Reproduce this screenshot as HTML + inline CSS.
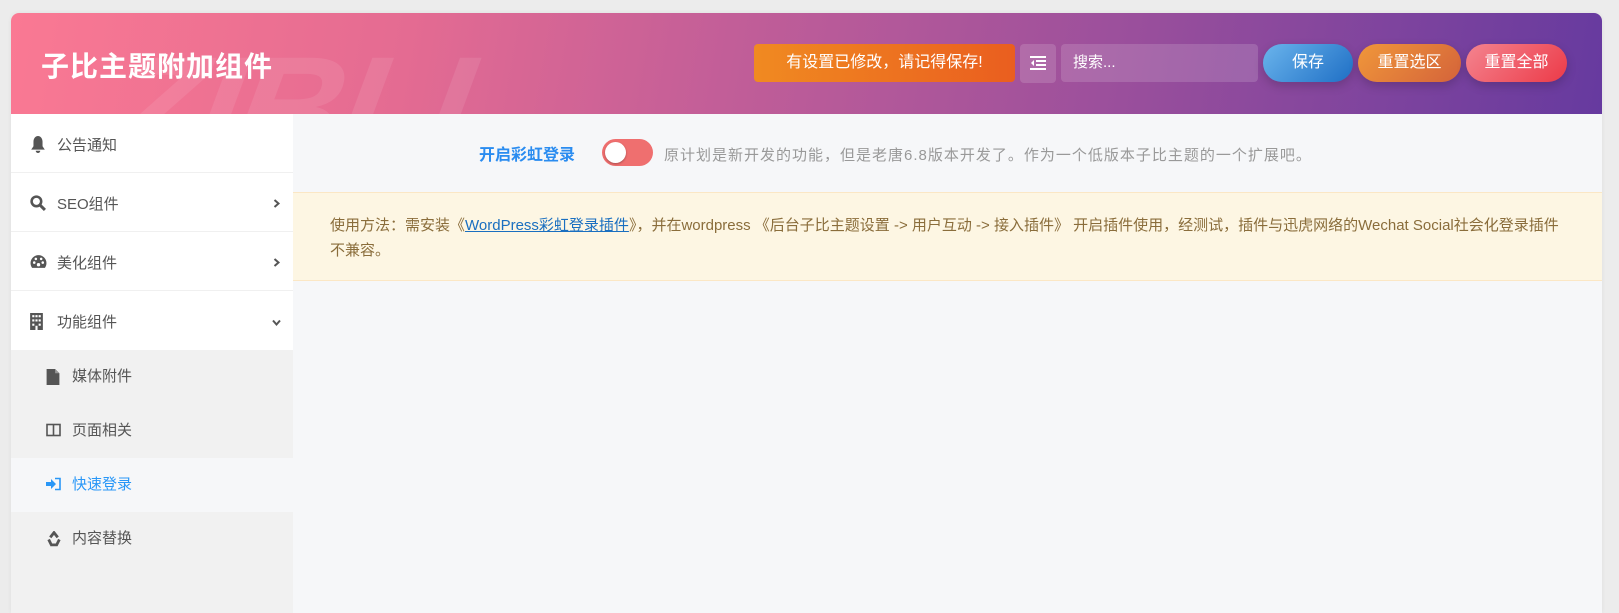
<!DOCTYPE html>
<html><head><meta charset="utf-8"><style>
*{box-sizing:border-box;margin:0;padding:0}
body{width:1619px;height:577px;background:#ececec;font-family:"Liberation Sans","Noto Sans CJK SC",sans-serif;font-size:14px;color:#555;overflow:hidden;position:relative}
.panel{position:absolute;left:11px;top:13px;width:1591px;height:600px;background:#f6f7f9;border-radius:8px 8px 0 0;overflow:hidden;box-shadow:0 0 4px rgba(0,0,0,.06)}
.hdr{position:absolute;left:0;top:0;width:1591px;height:101px;background:linear-gradient(100deg,#fa7993 0%,#e46b92 25%,#c25e98 45%,#9a4f9c 70%,#663a9f 100%);overflow:hidden}
.wm{position:absolute;left:100px;top:10px;font:italic 900 150px "Liberation Sans",sans-serif;color:rgba(255,255,255,.09);letter-spacing:-4px;transform:skewX(-10deg)}
.title{position:absolute;left:30px;top:32px;font-size:28px;font-weight:bold;color:#fff;letter-spacing:1px}
.b{position:absolute;top:31px;height:38px;line-height:37px;color:#fff;text-align:center;font-size:16px}
.note{left:743px;width:261px;background:linear-gradient(90deg,#f08a21,#ea5e1f);border-radius:4px}
.ib{left:1009px;width:36px;top:31px;height:39px;background:rgba(255,255,255,.15);border-radius:4px}
.sr{left:1050px;width:197px;background:rgba(255,255,255,.15);border-radius:4px;text-align:left;padding-left:12px;font-size:15px}
.pill{border-radius:19px;box-shadow:0 4px 10px rgba(0,0,0,.18)}
.sv{left:1252px;width:90px;background:linear-gradient(135deg,#6ab4ec,#1f6fc5)}
.r1{left:1347px;width:103px;background:linear-gradient(135deg,#f0973a,#d4633a)}
.r2{left:1455px;width:101px;background:linear-gradient(135deg,#f4848f,#ec3a48)}
.side{position:absolute;left:0;top:101px;width:283px;height:500px;background:#f1f1f1;border-right:1px solid #f6f7f9}
.it{height:59px;background:#fff;border-bottom:1px solid #f0f0f0;position:relative;line-height:63px;padding-left:46px;font-size:15px;color:#555}
.it svg{position:absolute;left:19px;top:22px}
.it svg.chev{position:absolute;left:261px;top:26px;width:9px;height:9px}
.sub{height:54px;line-height:54px;padding-left:61px;font-size:15px;color:#555;position:relative;background:#f1f1f1}
.sub svg{position:absolute;left:35px;top:19px}
.sub.act{background:#f6f7f9;color:#2997f7}
.lab{position:absolute;left:468px;top:128px;color:#2a8cf0;font-size:16px;font-weight:bold}
.tog{position:absolute;left:591px;top:126px;width:51px;height:27px;border-radius:14px;background:#ef6f6f}
.tog i{position:absolute;left:3px;top:3px;width:21px;height:21px;border-radius:50%;background:#fff;box-shadow:0 1px 2px rgba(0,0,0,.3)}
.desc{position:absolute;left:653px;top:131px;color:#999;font-size:15px;letter-spacing:1px}
.warn{position:absolute;left:282px;top:179px;width:1309px;height:89px;background:#fdf6e3;border-top:1px solid #fbe7c5;border-bottom:1px solid #fbe7c5;color:#8a6d3b;padding:20px 36px 0 37px;line-height:25px;font-size:15px}
.warn a{color:#1a6fc0;text-decoration:underline}
</style></head><body>
<div class="panel">
 <div class="hdr">
  <div class="wm">ZIBLL</div>
  <div class="title">子比主题附加组件</div>
  <div class="b note">有设置已修改，请记得保存!</div>
  <div class="b ib"><svg width="16" height="14" viewBox="0 0 16 14" style="margin-top:12px"><rect x="0" y="0" width="16" height="2" fill="#fff"/><rect x="6" y="4" width="10" height="2" fill="#fff"/><rect x="6" y="8" width="10" height="2" fill="#fff"/><rect x="0" y="12" width="16" height="2" fill="#fff"/><path d="M4 4L1 7L4 10Z" fill="#fff"/></svg></div>
  <div class="b sr">搜索...</div>
  <div class="b pill sv">保存</div>
  <div class="b pill r1">重置选区</div>
  <div class="b pill r2">重置全部</div>
 </div>
 <div class="side">
  <div class="it"><svg width="16" height="17" viewBox="0 0 14 15"><path d="M7 0C5 0 3 2 3 5v4L1 12h12l-2-3V5C11 2 9 0 7 0z M5 13a2 2 0 004 0z" fill="#555"/></svg>公告通知</div>
  <div class="it"><svg width="16" height="16" viewBox="0 0 15 15"><circle cx="6" cy="6" r="4.5" stroke="#555" stroke-width="2.4" fill="none"/><path d="M9.5 9.5L14 14" stroke="#555" stroke-width="2.8"/></svg>SEO组件<svg class="chev" viewBox="0 0 9 9"><path d="M2.5 1L6.5 4.5L2.5 8" stroke="#555" stroke-width="2" fill="none"/></svg></div>
  <div class="it"><svg width="17" height="15" viewBox="0 0 16 14"><path d="M8 1a7.5 7.5 0 00-7.5 7.5c0 2 .8 3.5 1.5 4.5h12c.7-1 1.5-2.5 1.5-4.5A7.5 7.5 0 008 1z" fill="#555"/><circle cx="4" cy="8" r="1.2" fill="#fff"/><circle cx="5.5" cy="4.5" r="1.2" fill="#fff"/><circle cx="10.5" cy="4.5" r="1.2" fill="#fff"/><circle cx="12" cy="8" r="1.2" fill="#fff"/><circle cx="8" cy="10" r="1.6" fill="#fff"/></svg>美化组件<svg class="chev" viewBox="0 0 9 9"><path d="M2.5 1L6.5 4.5L2.5 8" stroke="#555" stroke-width="2" fill="none"/></svg></div>
  <div class="it" style="border-bottom:0"><svg width="13" height="17" viewBox="0 0 12 16"><rect width="12" height="16" fill="#555"/><g fill="#fff"><rect x="2" y="2" width="2" height="2"/><rect x="5" y="2" width="2" height="2"/><rect x="8" y="2" width="2" height="2"/><rect x="2" y="6" width="2" height="2"/><rect x="5" y="6" width="2" height="2"/><rect x="8" y="6" width="2" height="2"/><rect x="2" y="10" width="2" height="2"/><rect x="8" y="10" width="2" height="2"/><rect x="5" y="12" width="2" height="4"/></g></svg>功能组件<svg class="chev" viewBox="0 0 9 9" style="top:27px"><path d="M1 2.5L4.5 6.5L8 2.5" stroke="#555" stroke-width="2" fill="none"/></svg></div>
  <div class="sub"><svg width="14" height="16" viewBox="0 0 12 15"><path d="M0 0h8l4 4v11H0z" fill="#555"/><path d="M8 0v4h4" fill="#999"/></svg>媒体附件</div>
  <div class="sub"><svg width="15" height="14" viewBox="0 0 15 13"><rect x="1" y="1" width="13" height="11" stroke="#555" stroke-width="1.6" fill="none"/><path d="M7.5 1v11" stroke="#555" stroke-width="1.6"/></svg>页面相关</div>
  <div class="sub act"><svg width="15" height="14" viewBox="0 0 15 13"><path d="M0 4.5h5V1.5L10 6.5L5 11.5V8.5H0z" fill="#2997f7"/><path d="M9 1h5v11H9" stroke="#2997f7" stroke-width="1.6" fill="none"/></svg>快速登录</div>
  <div class="sub"><svg width="16" height="16" viewBox="0 0 15 15"><g fill="none" stroke="#555" stroke-width="2.6"><path d="M4 6L7.5 1.5L11 6"/><path d="M12.5 8L10 13H4"/><path d="M2.5 8L5 13"/></g></svg>内容替换</div>
 </div>
 <div class="lab">开启彩虹登录</div>
 <div class="tog"><i></i></div>
 <div class="desc">原计划是新开发的功能，但是老唐6.8版本开发了。作为一个低版本子比主题的一个扩展吧。</div>
 <div class="warn">使用方法：需安装《<a>WordPress彩虹登录插件</a>》，并在wordpress 《后台子比主题设置 -&gt; 用户互动 -&gt; 接入插件》 开启插件使用，经测试，插件与迅虎网络的Wechat Social社会化登录插件不兼容。</div>
</div>
</body></html>
